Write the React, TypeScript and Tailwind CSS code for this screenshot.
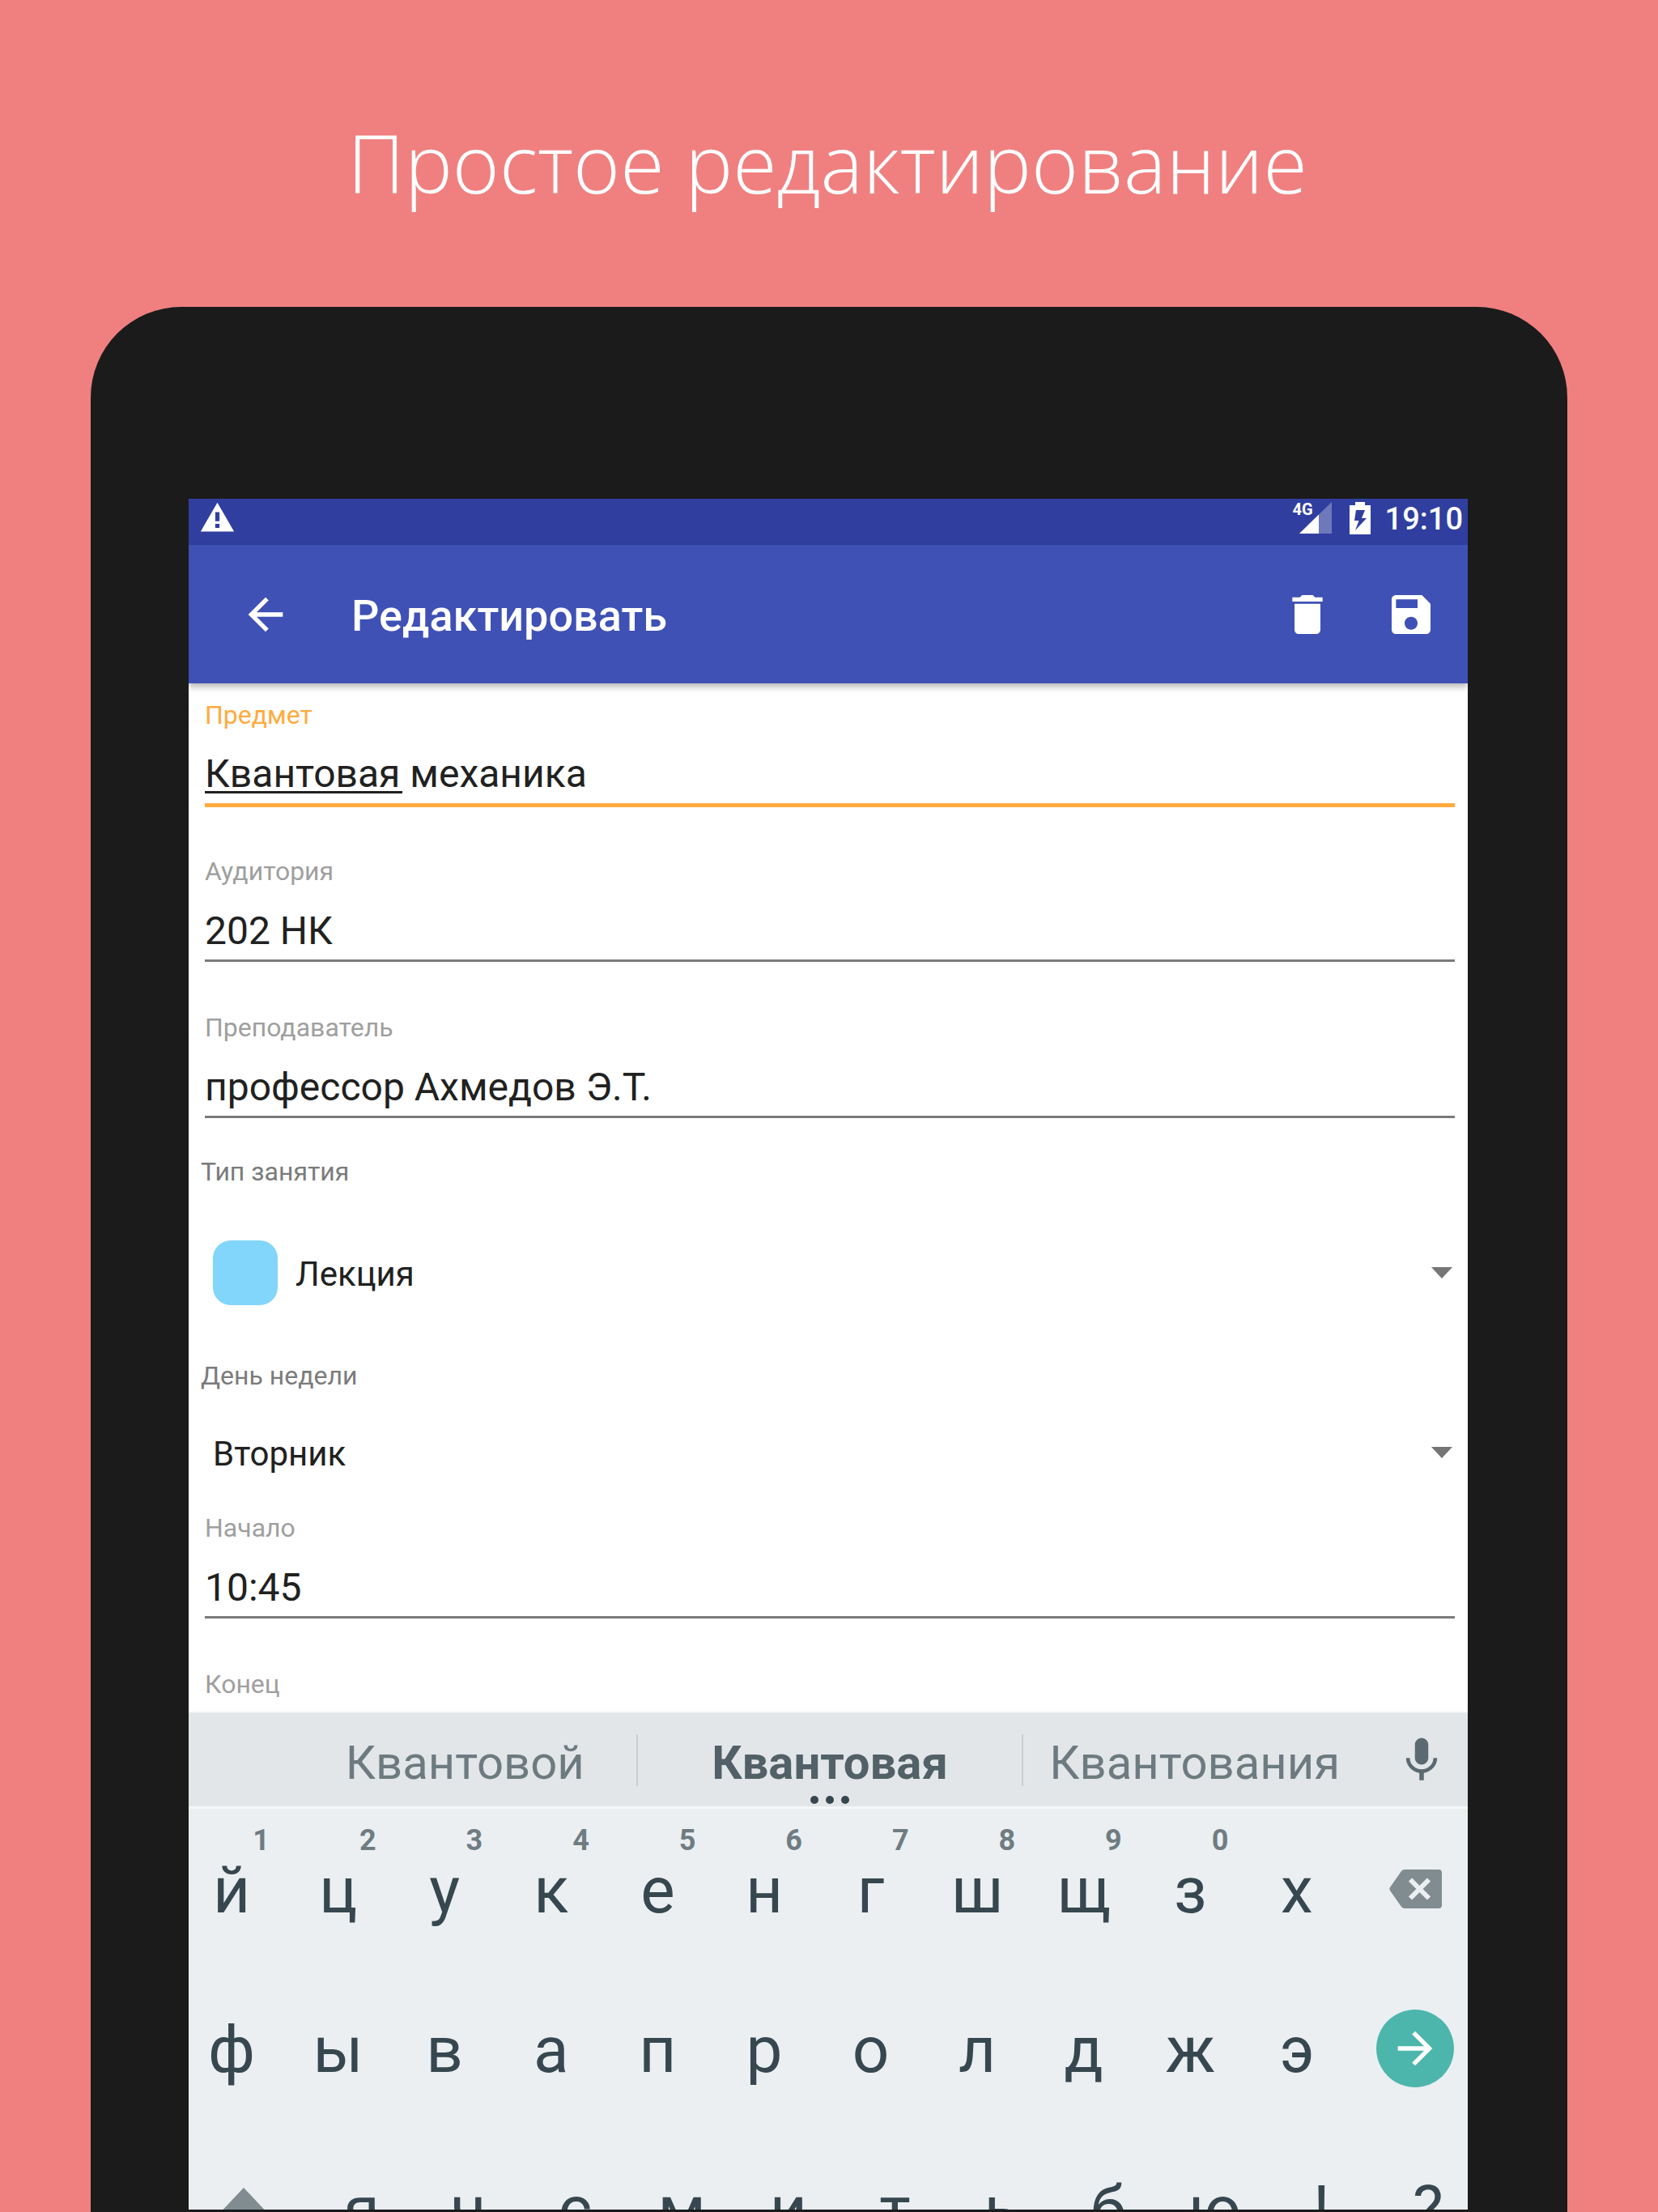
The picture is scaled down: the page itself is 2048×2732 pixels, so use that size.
import React from "react";

type IconProps = { className?: string };

const BackIcon = ({ className }: IconProps) => (
  <svg viewBox="0 0 24 24" fill="currentColor" className={className} aria-hidden="true">
    <path d="M20 11H7.83l5.59-5.59L12 4l-8 8 8 8 1.41-1.41L7.83 13H20v-2z" />
  </svg>
);

const TrashIcon = ({ className }: IconProps) => (
  <svg viewBox="0 0 24 24" fill="currentColor" className={className} aria-hidden="true">
    <path d="M6 19c0 1.1.9 2 2 2h8c1.1 0 2-.9 2-2V7H6v12zM19 4h-3.5l-1-1h-5l-1 1H5v2h14V4z" />
  </svg>
);

const SaveIcon = ({ className }: IconProps) => (
  <svg viewBox="0 0 24 24" fill="currentColor" className={className} aria-hidden="true">
    <path d="M17 3H5c-1.11 0-2 .9-2 2v14c0 1.1.89 2 2 2h14c1.1 0 2-.9 2-2V7l-4-4zm-5 16c-1.66 0-3-1.34-3-3s1.34-3 3-3 3 1.34 3 3-1.34 3-3 3zm3-10H5V5h10v4z" />
  </svg>
);

const WarningIcon = ({ className }: IconProps) => (
  <svg viewBox="0 0 24 24" fill="currentColor" className={className} aria-hidden="true">
    <path d="M1 21h22L12 2 1 21zm12.4-2.4h-2.8v-2.6h2.8v2.6zm0-4.4h-2.8V8.2h2.8v6z" />
  </svg>
);

const SignalIcon = ({ className }: IconProps) => (
  <svg viewBox="0 0 40 39" fill="currentColor" className={className} aria-hidden="true">
    <path d="M40 0v39H0z" opacity="0.3" />
    <path d="M24 15.600v23.400H0z" />
  </svg>
);

const BatteryIcon = ({ className }: IconProps) => (
  <svg viewBox="0 0 26 40" fill="currentColor" className={className} aria-hidden="true">
    <path
      fillRule="evenodd"
      d="M7 0h12v4h7v36H0V4h7zM8 10L6 23h5.500L7 35 21 20h-6l4-10z"
    />
  </svg>
);

const MicIcon = ({ className }: IconProps) => (
  <svg viewBox="0 0 24 24" fill="currentColor" className={className} aria-hidden="true">
    <path d="M12 14c1.660 0 3-1.340 3-3V5c0-1.660-1.340-3-3-3S9 3.340 9 5v6c0 1.660 1.340 3 3 3zm5.300-3c0 3-2.540 5.100-5.300 5.100S6.700 14 6.700 11H5c0 3.410 2.720 6.230 6 6.720V21h2v-3.280c3.280-.480 6-3.300 6-6.720h-1.700z" />
  </svg>
);

const BackspaceIcon = ({ className }: IconProps) => (
  <svg viewBox="0 0 65 48" className={className} aria-hidden="true">
    <path d="M19 0h42a4 4 0 0 1 4 4v40a4 4 0 0 1-4 4H19a5 5 0 0 1-4-2L1 26a4 4 0 0 1 0-4L15 2a5 5 0 0 1 4-2z" fill="#808c90" />
    <path d="M26 12.500l23 23M49 12.500l-23 23" stroke="#eceff1" strokeWidth="6" />
  </svg>
);

const ShiftIcon = ({ className }: IconProps) => (
  <svg viewBox="0 0 66 66" fill="currentColor" className={className} aria-hidden="true">
    <path d="M33 0l33 35H48v31H18V35H0z" />
  </svg>
);

const ForwardIcon = ({ className }: IconProps) => (
  <svg viewBox="0 0 24 24" fill="currentColor" className={className} aria-hidden="true">
    <path d="M12 4l-1.410 1.410L16.170 11H4v2h12.170l-5.580 5.590L12 20l8-8z" />
  </svg>
);

function Field({
  id,
  label,
  value,
  active = false,
}: {
  id: string;
  label: string;
  value: string;
  active?: boolean;
}) {
  return (
    <div className="relative flex h-[134px] flex-col">
      <label
        htmlFor={id}
        className={
          active
            ? "text-[32px] leading-10 text-[#ffab40]"
            : "text-[32px] leading-10 text-[#9f9f9f]"
        }
      >
        {label}
      </label>
      <input
        id={id}
        defaultValue={value}
        className={
          active
            ? "mt-[23px] h-[71px] w-full border-b-[5px] border-[#ffab40] bg-transparent pb-[6px] text-[48px] text-[#212121] outline-none"
            : "mt-[23px] h-[69px] w-full border-b-[3px] border-[#7b7b7b] bg-transparent pb-1 text-[48px] text-[#212121] outline-none"
        }
      />
      {active && (
        <span className="pointer-events-none absolute bottom-[17px] left-0 h-[3px] w-[244px] bg-[#212121]" />
      )}
    </div>
  );
}

function Dropdown({ id, value, swatch = false }: { id: string; value: string; swatch?: boolean }) {
  return (
    <div className="relative flex h-20 items-center pr-[19px] pl-[30px]">
      {swatch && <span className="mr-[22px] size-20 shrink-0 rounded-[22px] bg-[#82d5fb]" />}
      <select
        id={id}
        defaultValue={value}
        className="h-20 flex-1 appearance-none bg-transparent pt-[2px] text-[42px] text-[#212121] outline-none"
      >
        <option>{value}</option>
      </select>
      <svg
        viewBox="0 0 26 14"
        className="pointer-events-none absolute right-[19px] h-[14px] w-[26px]"
        aria-hidden="true"
      >
        <path d="M0 0h26L13 14z" fill="#757575" />
      </svg>
    </div>
  );
}

const rowOne: [string, string][] = [
  ["й", "1"],
  ["ц", "2"],
  ["у", "3"],
  ["к", "4"],
  ["е", "5"],
  ["н", "6"],
  ["г", "7"],
  ["ш", "8"],
  ["щ", "9"],
  ["з", "0"],
  ["х", ""],
];
const rowTwo = ["ф", "ы", "в", "а", "п", "р", "о", "л", "д", "ж", "э"];
const rowThree = ["я", "ч", "с", "м", "и", "т", "ь", "б", "ю", "!", "?"];

function Keyboard() {
  return (
    <section aria-label="Клавиатура" className="shrink-0 bg-[#ebeff2] text-[80px] text-[#37474f]">
      <div className="flex h-[117px] items-center border-t-2 border-[#edf0f1] bg-[#e2e6e9] pl-[130px] text-[58px] text-[#6d7b81]">
        <button className="h-full flex-[422] pt-2">Квантовой</button>
        <span className="h-16 w-[2px] bg-[#c9ced1]" />
        <button className="relative h-full flex-[474] pt-2 font-bold text-[#526067]">
          Квантовая
          <span className="absolute inset-x-0 bottom-[3px] flex justify-center gap-[9px]">
            <span className="size-[10px] rounded-full bg-[#37474f]" />
            <span className="size-[10px] rounded-full bg-[#37474f]" />
            <span className="size-[10px] rounded-full bg-[#37474f]" />
          </span>
        </button>
        <span className="h-16 w-[2px] bg-[#c9ced1]" />
        <button className="h-full flex-[422] pt-2">Квантования</button>
        <button aria-label="Голосовой ввод" className="flex w-[126px] justify-center pl-3">
          <MicIcon className="size-[66px] text-[#5b6a71]" />
        </button>
      </div>
      <div className="h-[3px] bg-[#f5f7f8]" />
      <div className="flex h-[197px]">
        <div className="flex flex-1 justify-between">
          {rowOne.map(([letter, digit]) => (
            <button key={letter} className="relative w-[106px] pt-1">
              {letter}
              <span className="absolute top-[19px] right-[6px] text-[36px] leading-10 font-bold text-[#6f7c82]">
                {digit}
              </span>
            </button>
          ))}
        </div>
        <button aria-label="Удалить символ" className="flex w-[158px] items-center justify-center pl-7">
          <BackspaceIcon className="h-12 w-[65px]" />
        </button>
      </div>
      <div className="flex h-[197px]">
        <div className="flex flex-1 justify-between">
          {rowTwo.map((letter) => (
            <button key={letter} className="w-[106px] pt-1">
              {letter}
            </button>
          ))}
        </div>
        <button aria-label="Далее" className="flex w-[158px] items-center justify-center pl-7">
          <span className="flex size-24 items-center justify-center rounded-full bg-[#4db6ac] text-white">
            <ForwardIcon className="size-16" />
          </span>
        </button>
      </div>
      <div className="flex h-[197px]">
        <button aria-label="Верхний регистр" className="flex w-[165px] items-center justify-center pt-4 pr-[29px]">
          <ShiftIcon className="size-[66px] text-[#808c90]" />
        </button>
        <div className="flex flex-1 justify-between">
          {rowThree.map((letter) => (
            <button key={letter} className="w-[98px] pt-1">
              {letter}
            </button>
          ))}
        </div>
      </div>
    </section>
  );
}

export default function App() {
  return (
    <div className="flex h-screen flex-col overflow-hidden bg-[#f08080] font-['Roboto',sans-serif]">
      <header className="flex h-[379px] shrink-0 items-center justify-center pt-6 pr-1">
        <h1 className="font-['Open_Sans',sans-serif] text-[99px] font-light text-white">
          Простое редактирование
        </h1>
      </header>
      <main className="mx-28 flex min-h-0 flex-1 flex-col rounded-t-[112px] bg-[#1b1b1b] pt-[237px] pr-[123px] pb-[3px] pl-[121px]">
        <div className="flex min-h-0 flex-1 flex-col overflow-hidden bg-white">
          <div className="flex h-[57px] shrink-0 items-center bg-[#303f9f] pr-[6px] pb-[10px] pl-[13px] text-white">
            <WarningIcon className="size-[45px]" />
            <div className="relative ml-auto h-[39px] w-12 pl-2">
              <span className="absolute top-0 left-0 text-[20px] leading-[18px] font-bold">4G</span>
              <SignalIcon className="h-[39px] w-10" />
            </div>
            <BatteryIcon className="ml-[22px] h-10 w-[26px]" />
            <span className="ml-[18px] pt-1 text-[38px] font-medium">19:10</span>
          </div>
          <div className="relative z-10 flex h-[171px] shrink-0 items-center bg-[#3f51b5] pr-[38px] pl-[63px] text-white shadow-[0_4px_8px_rgba(0,0,0,0.3)]">
            <button aria-label="Назад">
              <BackIcon className="size-16" />
            </button>
            <h2 className="ml-[74px] pt-1 text-[54px] font-medium">Редактировать</h2>
            <button aria-label="Удалить" className="ml-auto">
              <TrashIcon className="size-16" />
            </button>
            <button aria-label="Сохранить" className="ml-16">
              <SaveIcon className="size-16" />
            </button>
          </div>
          <form className="flex shrink-0 flex-col pt-[19px] pb-[14px]">
            <div className="flex flex-col gap-[59px] pr-4 pl-5">
              <Field id="subject" label="Предмет" value="Квантовая механика" active />
              <Field id="room" label="Аудитория" value="202 НК" />
              <Field id="teacher" label="Преподаватель" value="профессор Ахмедов Э.Т." />
            </div>
            <label htmlFor="kind" className="mt-11 pl-[15px] text-[32px] leading-10 text-[#7b7b7b]">
              Тип занятия
            </label>
            <div className="mt-[65px]">
              <Dropdown id="kind" value="Лекция" swatch />
            </div>
            <label htmlFor="day" className="mt-[67px] pl-[15px] text-[32px] leading-10 text-[#7b7b7b]">
              День недели
            </label>
            <div className="mt-[35px]">
              <Dropdown id="day" value="Вторник" />
            </div>
            <div className="mt-[33px] flex flex-col gap-[59px] pr-4 pl-5">
              <Field id="start" label="Начало" value="10:45" />
              <span className="text-[32px] leading-10 text-[#9f9f9f]">Конец</span>
            </div>
          </form>
          <Keyboard />
        </div>
      </main>
    </div>
  );
}
